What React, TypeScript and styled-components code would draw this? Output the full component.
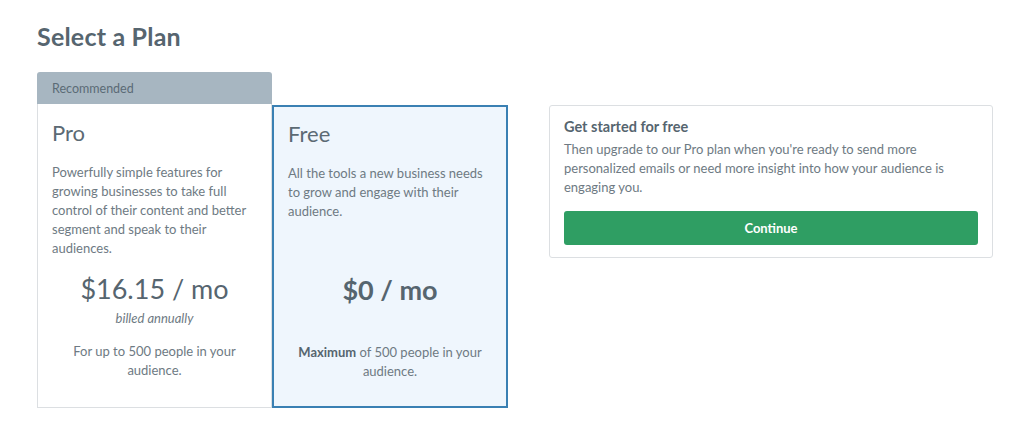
import { ReactNode } from "react";
import styled, { createGlobalStyle } from "styled-components";

const GlobalStyle = createGlobalStyle`
  html, body {
    margin: 0;
    padding: 0;
    background: #ffffff;
  }
  body {
    font-family: Lato, "Liberation Sans", sans-serif;
    color: #6b7780;
    -webkit-font-smoothing: antialiased;
  }
  * {
    box-sizing: border-box;
  }
`;

interface Plan {
  name: string;
  description: string;
  price: string;
  billing?: string;
  footer: ReactNode;
  selected?: boolean;
  recommended?: boolean;
}

const plans: Plan[] = [
  {
    name: "Pro",
    description:
      "Powerfully simple features for growing businesses to take full control of their content and better segment and speak to their audiences.",
    price: "$16.15 / mo",
    billing: "billed annually",
    footer: "For up to 500 people in your audience.",
    recommended: true,
  },
  {
    name: "Free",
    description:
      "All the tools a new business needs to grow and engage with their audience.",
    price: "$0 / mo",
    footer: (
      <>
        <strong>Maximum</strong> of 500 people in your audience.
      </>
    ),
    selected: true,
  },
];

const App = () => {
  return (
    <>
      <GlobalStyle />
      <Page>
        <Title>Select a Plan</Title>
        <Layout>
          <PlanGrid>
            {plans.map((plan, i) => (
              <PlanColumn key={plan.name} $col={i + 1}>
                {plan.recommended ? (
                  <RecommendedTab>Recommended</RecommendedTab>
                ) : (
                  <TabSpacer />
                )}
                <PlanCard $selected={plan.selected}>
                  <PlanName>{plan.name}</PlanName>
                  <PlanDescription>{plan.description}</PlanDescription>
                  <Price $bold={plan.selected}>{plan.price}</Price>
                  <Billing>{plan.billing}</Billing>
                  <PlanFooter>{plan.footer}</PlanFooter>
                </PlanCard>
              </PlanColumn>
            ))}
          </PlanGrid>
          <InfoPanel>
            <InfoHeading>Get started for free</InfoHeading>
            <InfoText>
              Then upgrade to our Pro plan when you're ready to send more
              personalized emails or need more insight into how your audience is
              engaging you.
            </InfoText>
            <ContinueButton type="button">Continue</ContinueButton>
          </InfoPanel>
        </Layout>
      </Page>
    </>
  );
};

const Page = styled.main`
  padding: 21px 0 0 37px;
`;

const Title = styled.h1`
  margin: 0 0 20px;
  font-size: 25px;
  line-height: 31px;
  font-weight: 700;
  color: #56656f;
  letter-spacing: 0.2px;
`;

const Layout = styled.div`
  display: flex;
  align-items: flex-start;
`;

const PlanGrid = styled.div`
  display: grid;
  flex-shrink: 0;
  grid-template-columns: 235px 236px;
`;

const PlanColumn = styled.div<{ $col: number }>`
  display: flex;
  flex-direction: column;
  grid-column: ${({ $col }) => $col};
`;

const RecommendedTab = styled.div`
  height: 32px;
  padding: 0 15px;
  display: flex;
  align-items: center;
  background: #a7b6c1;
  border-radius: 3px 3px 0 0;
  font-size: 12.5px;
  color: #5b6b76;
`;

const TabSpacer = styled.div`
  height: 33px;
`;

const PlanCard = styled.div<{ $selected?: boolean }>`
  height: ${({ $selected }) => ($selected ? "303px" : "304px")};
  display: flex;
  flex-direction: column;
  padding: ${({ $selected }) =>
    $selected ? "14px 14px 0 14px" : "16px 14px 0 14px"};
  background: ${({ $selected }) => ($selected ? "#eff6fd" : "#ffffff")};
  border: ${({ $selected }) =>
    $selected ? "2px solid #3a80b3" : "1px solid #dcdfe2"};
  border-top: ${({ $selected }) =>
    $selected ? "2px solid #3a80b3" : "none"};
`;

const PlanName = styled.h2`
  margin: 0;
  font-size: 22px;
  line-height: 26px;
  font-weight: 400;
  color: #5c6a74;
`;

const PlanDescription = styled.p`
  margin: 17px 0 0;
  min-height: 95px;
  font-size: 13px;
  line-height: 19px;
  color: #6e7a83;
`;

const Price = styled.div<{ $bold?: boolean }>`
  margin-top: 14px;
  text-align: center;
  font-size: 27px;
  line-height: 34px;
  font-weight: ${({ $bold }) => ($bold ? 700 : 400)};
  color: #56656f;
`;

const Billing = styled.div`
  margin-top: 3px;
  min-height: 19px;
  text-align: center;
  font-size: 13px;
  line-height: 19px;
  font-style: italic;
  color: #6e7a83;
`;

const PlanFooter = styled.p`
  margin: 14px 0 0;
  text-align: center;
  font-size: 13px;
  line-height: 19px;
  color: #6e7a83;
  padding: 0 8px;

  strong {
    font-weight: 700;
    color: #56656f;
  }
`;

const InfoPanel = styled.section`
  width: 444px;
  flex-shrink: 0;
  margin: 33px 0 0 41px;
  padding: 11px 14px 12px;
  border: 1px solid #dcdfe2;
  border-radius: 3px;
`;

const InfoHeading = styled.h3`
  margin: 0;
  font-size: 14.5px;
  line-height: 20px;
  font-weight: 700;
  color: #56656f;
`;

const InfoText = styled.p`
  margin: 3px 0 0;
  font-size: 13px;
  line-height: 19px;
  color: #6e7a83;
`;

const ContinueButton = styled.button`
  display: block;
  width: 100%;
  height: 34px;
  margin-top: 14px;
  border: none;
  border-radius: 3px;
  background: #2f9e63;
  color: #ffffff;
  font-family: Lato, "Liberation Sans", sans-serif;
  font-size: 13px;
  font-weight: 700;
  cursor: pointer;
`;

export default App;
